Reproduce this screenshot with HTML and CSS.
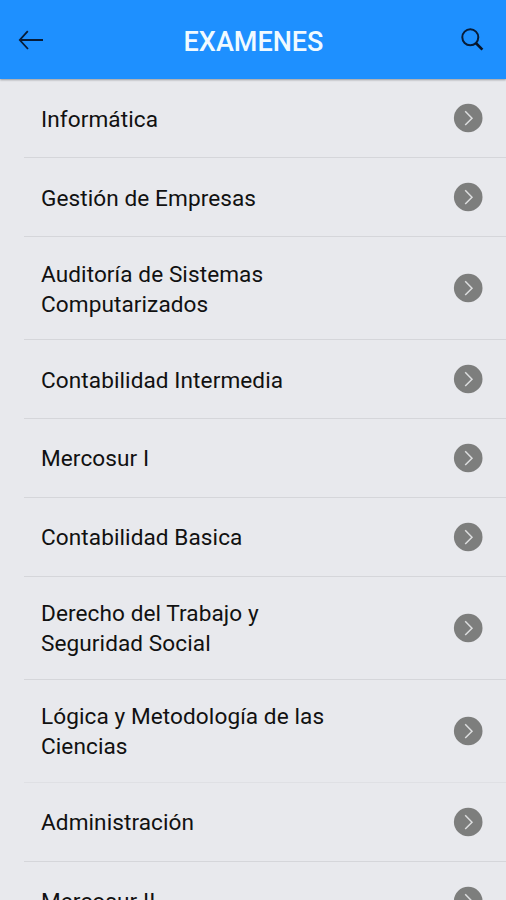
FILE: index.html
```html
<!DOCTYPE html>
<html lang="es">
<head>
<meta charset="utf-8">
<title>Examenes</title>
<link rel="stylesheet" href="styles.css">
</head>
<body>
<svg class="defs" width="0" height="0"><symbol id="go" viewBox="0 0 30 30"><circle cx="15.2" cy="15" r="14.3" fill="#7d7e7d"/><path d="M12.2 8.3 19 15.2 12.2 22" fill="none" stroke="#dddedf" stroke-width="1.5"/></symbol></svg>
<header class="bar">
<svg class="back" viewBox="0 0 26 20"><path d="M1.5 10H25M9.8 1.2 1.8 10 10 19" fill="none" stroke="#071c38" stroke-width="1.8"/></svg>
<h1 class="title">EXAMENES</h1>
<svg class="search" viewBox="0 0 24 24"><circle cx="10.3" cy="9.3" r="8" fill="none" stroke="#071c38" stroke-width="2"/><path d="M15.8 15 22.4 21.6" stroke="#071428" stroke-width="2.6"/></svg>
</header>
<ul class="list">
<li class="row"><span class="name">Informática</span><svg class="go"><use href="#go"/></svg></li>
<li class="row"><span class="name">Gestión de Empresas</span><svg class="go"><use href="#go"/></svg></li>
<li class="row tall"><span class="name">Auditoría de Sistemas<br>Computarizados</span><svg class="go"><use href="#go"/></svg></li>
<li class="row"><span class="name">Contabilidad Intermedia</span><svg class="go"><use href="#go"/></svg></li>
<li class="row"><span class="name">Mercosur I</span><svg class="go"><use href="#go"/></svg></li>
<li class="row"><span class="name">Contabilidad Basica</span><svg class="go"><use href="#go"/></svg></li>
<li class="row tall"><span class="name">Derecho del Trabajo y<br>Seguridad Social</span><svg class="go"><use href="#go"/></svg></li>
<li class="row tall faint"><span class="name">Lógica y Metodología de las<br>Ciencias</span><svg class="go"><use href="#go"/></svg></li>
<li class="row"><span class="name">Administración</span><svg class="go"><use href="#go"/></svg></li>
<li class="row"><span class="name">Mercosur II</span><svg class="go"><use href="#go"/></svg></li>
</ul>
</body>
</html>
```
FILE: styles.css
```css
* { box-sizing: border-box; }
html, body { height: 900px; overflow: hidden; }
body { margin: 0; background: #e8e9ed; color: #111; font-family: Roboto, sans-serif; }
.defs { display: none; }
.bar { height: 79px; background: #1e90ff; display: grid; grid-template-columns: 26px 1fr 24px; align-items: center; padding: 1px 22px 0 18px; box-shadow: 0 1px 2px rgba(0, 0, 0, .35); }
.back { width: 26px; height: 20px; }
.search { width: 24px; height: 24px; }
.title { margin: 0; text-align: center; color: #f0faff; font-size: 27px; font-weight: 500; line-height: 32px; padding: 4px 0 0 3px; }
.list { list-style: none; margin: 0 0 0 24px; padding: 0; }
.row { height: 78.95px; display: flex; align-items: center; justify-content: space-between; padding: 0 23px 0 17px; border-bottom: 1px solid #d5d6da; }
.tall { height: 103px; }
.faint { border-bottom-color: #dfe0e4; }
.name { font-size: 22.6px; line-height: 30px; letter-spacing: .08px; padding-top: 3.4px; white-space: nowrap; }
.go { width: 30px; height: 30px; flex: none; }
```
